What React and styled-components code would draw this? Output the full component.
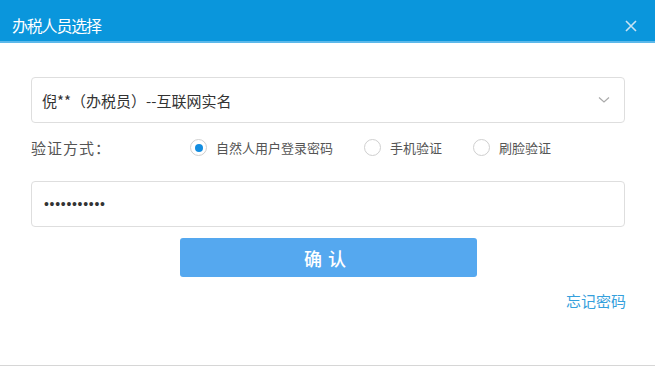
import React, { useState } from 'react';
import styled, { createGlobalStyle } from 'styled-components';

const GlobalStyle = createGlobalStyle`
  html, body {
    margin: 0;
    padding: 0;
    background: #fff;
  }
  body {
    font-family: "Microsoft YaHei", "Noto Sans CJK SC", "Liberation Sans", sans-serif;
  }
`;

const Dialog = styled.div`
  width: 655px;
  height: 366px;
  box-sizing: border-box;
  background: #fff;
  border-bottom: 1px solid #d6d6d6;
  display: flex;
  flex-direction: column;
`;

const Header = styled.div`
  height: 43px;
  box-sizing: border-box;
  padding: 8px 18px 0 12px;
  background: #0a96dc;
  border-bottom: 2px solid #5cb8ea;
  display: flex;
  align-items: center;
  justify-content: space-between;
`;

const Title = styled.h2`
  margin: 0;
  color: #fff;
  font-size: 16px;
  font-weight: normal;
  letter-spacing: -1.2px;
`;

const CloseBtn = styled.button`
  border: none;
  background: none;
  padding: 0;
  margin-top: 2px;
  width: 12px;
  height: 12px;
  display: flex;
  cursor: pointer;
`;

const Body = styled.div`
  padding: 34px 30px 0 31px;
  display: flex;
  flex-direction: column;
`;

const Field = styled.div`
  height: 46px;
  box-sizing: border-box;
  border: 1px solid #dedede;
  border-radius: 4px;
  display: flex;
  align-items: center;
  justify-content: space-between;
  padding: 0 14px 0 ${p => p.$indent || 10}px;
  color: #333;
  font-size: 15px;
`;

const Row = styled.div`
  height: 58px;
  display: flex;
  align-items: center;
  padding-bottom: 9px;
  box-sizing: border-box;
  color: #555;
  font-size: 15px;
`;

const Label = styled.span`
  width: 159px;
  letter-spacing: 1px;
`;

const Option = styled.label`
  display: flex;
  align-items: center;
  gap: 9px;
  margin-right: ${p => p.$gap}px;
  font-size: 13px;
  color: #555;
  cursor: pointer;
`;

const Radio = styled.span`
  width: 17px;
  height: 17px;
  box-sizing: border-box;
  border: 1px solid #cfcfcf;
  border-radius: 50%;
  display: flex;
  align-items: center;
  justify-content: center;
  &::after {
    content: '';
    width: 8px;
    height: 8px;
    border-radius: 50%;
    background: ${p => (p.$on ? '#138de0' : 'transparent')};
  }
`;

const Dots = styled.span`
  font-family: "Liberation Sans", sans-serif;
  font-size: 14px;
  letter-spacing: 0.7px;
  color: #333;
`;

const Confirm = styled.button`
  align-self: center;
  margin: 11px 0 0 0;
  width: 297px;
  height: 39px;
  border: none;
  border-radius: 3px;
  background: #55a8ef;
  color: #fff;
  font-family: inherit;
  font-size: 18px;
  font-weight: 500;
  letter-spacing: 6px;
  padding-left: 6px;
  cursor: pointer;
`;

const Forgot = styled.a`
  align-self: flex-end;
  margin: 13px -1px 0 0;
  color: #35a0dc;
  font-size: 15px;
  cursor: pointer;
`;

const options = [
  { text: '自然人用户登录密码', gap: 31 },
  { text: '手机验证', gap: 31 },
  { text: '刷脸验证', gap: 0 },
];

export default function App() {
  const [method, setMethod] = useState(0);

  return (
    <>
      <GlobalStyle />
      <Dialog>
        <Header>
          <Title>办税人员选择</Title>
          <CloseBtn aria-label="close">
            <svg width="12" height="12" viewBox="0 0 12 12">
              <path d="M1 1 L11 11 M11 1 L1 11" stroke="#c9e3f3" strokeWidth="1.6" />
            </svg>
          </CloseBtn>
        </Header>
        <Body>
          <Field>
            <span>倪**（办税员）--互联网实名</span>
            <svg width="12" height="8" viewBox="0 0 12 8">
              <path d="M1 1.5 L6 6 L11 1.5" stroke="#aaa" strokeWidth="1.2" fill="none" />
            </svg>
          </Field>
          <Row>
            <Label>验证方式：</Label>
            {options.map((o, i) => (
              <Option key={o.text} $gap={o.gap} onClick={() => setMethod(i)}>
                <Radio $on={method === i} />
                {o.text}
              </Option>
            ))}
          </Row>
          <Field $indent={12}>
            <Dots>•••••••••••</Dots>
          </Field>
          <Confirm>确认</Confirm>
          <Forgot>忘记密码</Forgot>
        </Body>
      </Dialog>
    </>
  );
}
